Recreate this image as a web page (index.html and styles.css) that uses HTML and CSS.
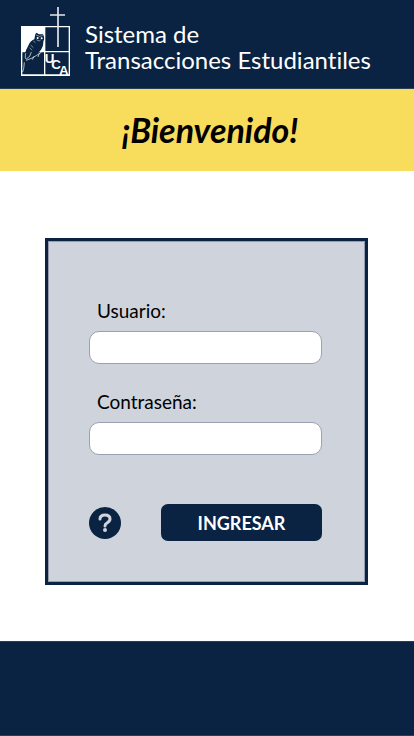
FILE: index.html
```html
<!DOCTYPE html>
<html lang="es">
<head>
<meta charset="utf-8">
<meta name="viewport" content="width=device-width, initial-scale=1">
<title>Sistema de Transacciones Estudiantiles</title>
<link rel="stylesheet" href="styles.css">
</head>
<body>
<header class="header">
  <svg class="logo" viewBox="21 21 147 207" aria-hidden="true">
    <path d="M21 78H168V228H21Z" fill="#fff"/>
    <path d="M94 82H164V153H94ZM25 157H90V223H25ZM94 157H164V223H94Z" fill="#0a2342"/>
    <path d="M132 21V141M108 45H153" fill="none" stroke="#e4e7ec" stroke-width="5"/>
    <path d="M64 103L67 98L75 103L87 103L90 110Q92 117 88 125Q88 143 76 155Q62 166 49 174L34 188L25 212Q26 193 34 177Q28 163 42 139Q48 123 61 118Z" fill="#0a2342"/>
    <path d="M35 160Q32 177 37 177Q50 171 52 156M36 181Q54 176 68 166Q84 160 89 144M60 169L55 179M76 160L72 171M31 187Q30 207 26 216" fill="none" stroke="#fff" stroke-width="2"/>
    <path d="M66 105L76 109L86 107M67 119L75 123L80 120M58 123L64 128M50 135L58 143M47 143L54 151" fill="none" stroke="#b9c3d0" stroke-width="2"/>
    <circle cx="71" cy="114" r="3" fill="#fff"/>
    <circle cx="83" cy="115" r="3" fill="#fff"/>
    <text class="logo-letters" x="92" y="189">U<tspan x="112" y="206">C</tspan><tspan x="135" y="224">A</tspan></text>
  </svg>
  <h1 class="title">Sistema de<br>Transacciones Estudiantiles</h1>
</header>
<div class="banner"><h2 class="welcome">¡Bienvenido!</h2></div>
<main class="main">
  <form class="card">
    <div class="field">
      <label for="user">Usuario:</label>
      <input id="user" type="text">
    </div>
    <div class="field">
      <label for="password">Contraseña:</label>
      <input id="password" type="password">
    </div>
    <div class="actions">
      <button class="help" type="button" aria-label="Ayuda">
        <svg viewBox="0 0 32 32" aria-hidden="true">
          <circle cx="16" cy="16" r="16" fill="#0a2342"/>
          <path d="M11 12Q11 8 16 8Q21 8 21 12Q21 14 18 16Q16 17 16 19" fill="none" stroke="#cfd3dc" stroke-width="3" stroke-linecap="round"/>
          <circle cx="16" cy="23" r="2" fill="#cfd3dc"/>
        </svg>
      </button>
      <button class="submit" type="submit">INGRESAR</button>
    </div>
  </form>
</main>
<footer class="footer"></footer>
</body>
</html>
```
FILE: styles.css
```css
* {
  box-sizing: border-box;
}

body {
  margin: 0;
  min-height: 100vh;
  display: flex;
  flex-direction: column;
  background: #fff;
  color: #000;
  font-family: "Century Gothic", Lato, sans-serif;
  font-variant-ligatures: none;
}

.header {
  display: flex;
  align-items: center;
  gap: 15px;
  padding: 7px 21px 12px;
  background: #0a2342;
  border-bottom: 1px solid #2c3e57;
}

.logo {
  width: 49px;
  height: 69px;
  flex: none;
  overflow: visible;
}

.logo-letters {
  fill: #fff;
  font-family: "Liberation Sans Narrow", "Liberation Sans", sans-serif;
  font-size: 40px;
  font-weight: 700;
}

.title {
  margin: 10px 0 0;
  color: #fff;
  font-size: 24px;
  font-weight: 400;
  line-height: 26px;
}

.banner {
  padding: 20px 18px 20px 24px;
  background: #f8dc5c;
}

.welcome {
  margin: 0;
  font-size: 34px;
  line-height: 42px;
  font-style: italic;
  font-weight: 700;
  text-align: center;
}

.main {
  flex: 1;
  padding: 67px 46px 56px 45px;
}

.card {
  display: flex;
  flex-direction: column;
  gap: 27px;
  padding: 59px 43px 41px 41px;
  background: #cfd3dc;
  border: 3px solid #0a2342;
  outline: 1px solid #949cae;
  outline-offset: -4px;
}

.field {
  display: flex;
  flex-direction: column;
  gap: 9px;
}

.field label {
  padding-left: 8px;
  font-size: 19px;
  line-height: 22px;
}

.field input {
  width: 100%;
  height: 33px;
  padding: 4px 12px;
  background: #fff;
  border: 1px solid #9ba1b2;
  border-radius: 10px;
  font: inherit;
}

.actions {
  display: flex;
  align-items: center;
  gap: 40px;
  margin-top: 22px;
}

.help {
  width: 32px;
  height: 32px;
  flex: none;
  padding: 0;
  border: 0;
  background: none;
}

.help svg {
  display: block;
}

.submit {
  flex: 1;
  height: 37px;
  padding: 0;
  border: 0;
  border-radius: 7px;
  background: #0a2342;
  color: #fff;
  font: inherit;
  font-size: 18px;
  font-weight: 700;
}

.footer {
  height: 95px;
  background: #0a2342;
  border-top: 1px solid #2c3e57;
  border-bottom: 1px solid #2c3e57;
}
```
